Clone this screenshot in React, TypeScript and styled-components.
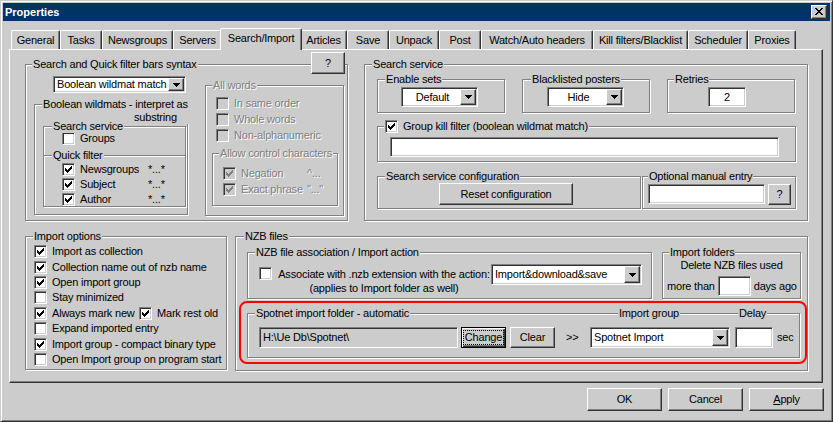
import React from "react";
import styled, { createGlobalStyle, css } from "styled-components";

const FACE = "#cccccc";
const LIGHT = "#ffffff";
const SHADOW = "#808080";
const DARK = "#333333";

const GlobalStyle = createGlobalStyle`
  html, body { margin: 0; padding: 0; background: ${FACE}; }
  body {
    font-family: "Liberation Sans", Arial, sans-serif;
    font-size: 11px;
    line-height: 13px;
    letter-spacing: -0.2px;
    color: #000;
  }
  *, *::before, *::after { box-sizing: border-box; }
`;

const raised = css`
  background: ${FACE};
  border: 1px solid;
  border-color: ${LIGHT} ${DARK} ${DARK} ${LIGHT};
  box-shadow: inset -1px -1px ${SHADOW};
`;

const sunken = css`
  border: 1px solid;
  border-color: ${SHADOW} ${LIGHT} ${LIGHT} ${SHADOW};
  box-shadow: inset 1px 1px ${DARK}, inset -1px -1px ${FACE};
`;

const disabledText = css`
  color: ${SHADOW};
  text-shadow: 1px 1px 0 ${LIGHT};
`;

const Window = styled.div`
  width: 833px;
  height: 422px;
  background: ${FACE};
  border: 1px solid;
  border-color: ${FACE} ${DARK} ${DARK} ${FACE};
  box-shadow: inset 1px 1px ${LIGHT}, inset -1px -1px ${SHADOW};
  padding: 2px;
  display: flex;
  flex-direction: column;
`;

const TitleBar = styled.div`
  height: 18px;
  background: #003366;
  color: #fff;
  font-weight: bold;
  letter-spacing: 0;
  display: flex;
  align-items: center;
  justify-content: space-between;
  padding: 0 3px 0 2px;
`;

const CloseButton = styled.div`
  ${raised};
  width: 16px;
  height: 14px;
  display: flex;
  align-items: center;
  justify-content: center;
  padding-bottom: 1px;
`;

const TabStrip = styled.div`
  display: flex;
  align-items: flex-end;
  height: 21px;
  margin: 7px 0 0 8px;
`;

const Tab = styled.div<{ $w: number; $active?: boolean }>`
  flex: none;
  width: ${(p) => (p.$active ? p.$w + 4 : p.$w)}px;
  height: ${(p) => (p.$active ? 22 : 19)}px;
  margin: ${(p) => (p.$active ? "0 -2px -1px" : "0")};
  position: relative;
  z-index: ${(p) => (p.$active ? 1 : 0)};
  background: ${FACE};
  border-top: 1px solid ${LIGHT};
  border-left: 1px solid ${LIGHT};
  border-right: 1px solid ${DARK};
  box-shadow: inset -1px 0 ${SHADOW};
  border-radius: 2px 2px 0 0;
  text-align: center;
  padding-top: 3px;
  white-space: nowrap;
`;

const Panel = styled.div`
  width: 814px;
  height: 334px;
  margin-left: 6px;
  border-top: 1px solid ${LIGHT};
  border-left: 1px solid ${LIGHT};
  border-right: 1px solid ${DARK};
  border-bottom: 1px solid ${DARK};
  box-shadow: inset -1px -1px ${SHADOW};
  padding: 14px 0 0 15px;
  display: flex;
  flex-direction: column;
  gap: 15px;
`;

const GroupRow = styled.div<{ $gap: number; $mt?: number; $ml?: number }>`
  display: flex;
  align-items: flex-start;
  gap: ${(p) => p.$gap}px;
  margin-top: ${(p) => p.$mt ?? 0}px;
  margin-left: ${(p) => p.$ml ?? 0}px;
`;

const Group = styled.div<{
  $w: number;
  $h: number;
  $pad?: string;
  $mt?: number;
  $dir?: "row" | "column";
  $gap?: number;
}>`
  position: relative;
  flex: none;
  width: ${(p) => p.$w}px;
  height: ${(p) => p.$h}px;
  margin-top: ${(p) => p.$mt ?? 0}px;
  border: 1px solid ${SHADOW};
  box-shadow: inset 1px 1px ${LIGHT}, 1px 1px ${LIGHT};
  padding: ${(p) => p.$pad ?? "0"};
  display: flex;
  flex-direction: ${(p) => p.$dir ?? "column"};
  align-items: flex-start;
  gap: ${(p) => p.$gap ?? 0}px;
`;

const Legend = styled.span<{ $left?: number; $disabled?: boolean }>`
  position: absolute;
  top: -7px;
  left: ${(p) => p.$left ?? 7}px;
  padding: 0 1px;
  background: ${FACE};
  line-height: 13px;
  white-space: nowrap;
  ${(p) => p.$disabled && disabledText};
`;

const LegendSecondLine = styled.span`
  display: block;
  margin-left: 91px;
`;

const CheckLegend = styled.span`
  position: absolute;
  top: -7px;
  left: 6px;
  padding: 0 1px;
  background: ${FACE};
  display: flex;
  align-items: center;
  gap: 5px;
  height: 13px;
  white-space: nowrap;
`;

const CornerButton = styled.div`
  ${raised};
  position: absolute;
  left: 285px;
  top: -13px;
  width: 34px;
  height: 22px;
  display: flex;
  align-items: center;
  justify-content: center;
`;

const Column = styled.div<{ $pt: number }>`
  display: flex;
  flex-direction: column;
  align-items: flex-start;
  padding-top: ${(p) => p.$pt}px;
`;

const CheckList = styled.div<{ $pl: number; $mt?: number; $row: number }>`
  display: flex;
  flex-direction: column;
  padding-left: ${(p) => p.$pl}px;
  margin-top: ${(p) => p.$mt ?? 0}px;
  & > div { height: ${(p) => p.$row}px; }
`;

const CheckRow = styled.div<{ $disabled?: boolean }>`
  display: flex;
  align-items: center;
  gap: 5px;
  white-space: nowrap;
  ${(p) => p.$disabled && disabledText};
`;

const CheckLabel = styled.span<{ $w?: number }>`
  display: inline-block;
  flex: none;
  ${(p) => (p.$w ? `width: ${p.$w}px;` : "")}
  white-space: nowrap;
`;

const Pattern = styled.span`
  white-space: pre;
`;

const CheckBoxFrame = styled.span<{ $disabled?: boolean; $mt?: number }>`
  ${sunken};
  flex: none;
  width: 13px;
  height: 13px;
  margin-top: ${(p) => p.$mt ?? 0}px;
  background: ${(p) => (p.$disabled ? FACE : "#fff")};
  display: flex;
  align-items: center;
  justify-content: center;
`;

const Separator = styled.div<{ $mt: number }>`
  position: relative;
  align-self: stretch;
  height: 2px;
  margin-top: ${(p) => p.$mt}px;
  border-top: 1px solid ${SHADOW};
  border-bottom: 1px solid ${LIGHT};
`;

const ComboFrame = styled.div<{ $w: number; $h: number; $ml?: number; $mt?: number }>`
  ${sunken};
  flex: none;
  background: #fff;
  width: ${(p) => p.$w}px;
  height: ${(p) => p.$h}px;
  margin-left: ${(p) => p.$ml ?? 0}px;
  margin-top: ${(p) => p.$mt ?? 0}px;
  padding: 1px;
  display: flex;
`;

const ComboText = styled.div<{ $center?: boolean }>`
  flex: 1;
  display: flex;
  align-items: center;
  justify-content: ${(p) => (p.$center ? "center" : "flex-start")};
  padding-left: 2px;
  white-space: nowrap;
  overflow: hidden;
`;

const DropButton = styled.div`
  ${raised};
  flex: none;
  width: 16px;
  display: flex;
  align-items: center;
  justify-content: center;
`;

const TextBox = styled.div<{ $w: number; $h: number; $ml?: number; $center?: boolean; $disabled?: boolean }>`
  ${sunken};
  flex: none;
  width: ${(p) => p.$w}px;
  height: ${(p) => p.$h}px;
  margin-left: ${(p) => p.$ml ?? 0}px;
  background: ${(p) => (p.$disabled ? FACE : "#fff")};
  display: flex;
  align-items: center;
  justify-content: ${(p) => (p.$center ? "center" : "flex-start")};
  padding: 0 3px;
  white-space: nowrap;
  overflow: hidden;
`;

const Button = styled.div<{ $w: number; $h: number; $ml?: number; $default?: boolean }>`
  ${raised};
  flex: none;
  width: ${(p) => p.$w}px;
  height: ${(p) => p.$h}px;
  margin-left: ${(p) => p.$ml ?? 0}px;
  display: flex;
  align-items: center;
  justify-content: center;
  white-space: nowrap;
  ${(p) =>
    p.$default &&
    css`
      border: 1px solid #000;
      box-shadow: inset 1px 1px ${LIGHT}, inset -1px -1px ${DARK}, inset -2px -2px ${SHADOW};
    `};
`;

const FocusText = styled.span`
  outline: 1px dotted #000;
  outline-offset: 0;
  padding: 0 1px;
  line-height: 13px;
`;

const Underline = styled.span`
  text-decoration: underline;
`;

const AssocText = styled.div`
  flex: none;
  width: 214px;
  margin: 14px 0 0 5px;
  line-height: 14px;
  text-align: center;
  white-space: nowrap;
`;

const CenterLine = styled.div`
  align-self: stretch;
  text-align: center;
  line-height: 14px;
  white-space: nowrap;
`;

const InlineRow = styled.div<{ $mt: number; $pl: number; $gap: number }>`
  display: flex;
  align-items: center;
  gap: ${(p) => p.$gap}px;
  margin-top: ${(p) => p.$mt}px;
  padding-left: ${(p) => p.$pl}px;
  white-space: nowrap;
`;

const Highlight = styled.div`
  width: 568px;
  height: 63px;
  margin-top: 2px;
  border: 2px solid #ff0000;
  border-radius: 8px;
  padding: 10px 0 0 6px;
`;

const Arrows = styled.span`
  flex: none;
  width: 24px;
  margin-left: 11px;
  line-height: 21px;
`;

const Unit = styled.span`
  margin-left: 4px;
  line-height: 21px;
`;

const ButtonBar = styled.div`
  display: flex;
  justify-content: flex-end;
  gap: 6px;
  margin-top: 5px;
  padding-right: 6px;
`;

/* ---------- drawings ---------- */

const CheckMark = ({ color }: { color: string }) => (
  <svg width="7" height="7" viewBox="0 0 7 7" shapeRendering="crispEdges">
    <path
      fill={color}
      d="M6 0h1v1h-1z M5 1h2v1h-2z M0 2h1v1h-1z M4 2h3v1h-3z M0 3h2v1h-2z M3 3h3v1h-3z M0 4h5v1h-5z M1 5h3v1h-3z M2 6h1v1h-1z"
    />
  </svg>
);

const DownArrow = () => (
  <svg width="7" height="4" viewBox="0 0 7 4" shapeRendering="crispEdges">
    <path fill="#000" d="M0 0h7v1H0z M1 1h5v1H1z M2 2h3v1H2z M3 3h1v1H3z" />
  </svg>
);

const CloseGlyph = () => (
  <svg width="8" height="7" viewBox="0 0 8 7" shapeRendering="crispEdges">
    <path
      fill="#000"
      d="M0 0h2v1H0z M6 0h2v1H6z M1 1h2v1H1z M5 1h2v1H5z M2 2h4v1H2z M3 3h2v1H3z M2 4h4v1H2z M1 5h2v1H1z M5 5h2v1H5z M0 6h2v1H0z M6 6h2v1H6z"
    />
  </svg>
);

const Check = ({ on, disabled, mt }: { on?: boolean; disabled?: boolean; mt?: number }) => (
  <CheckBoxFrame $disabled={disabled} $mt={mt}>
    {on && <CheckMark color={disabled ? SHADOW : "#000"} />}
  </CheckBoxFrame>
);

const Combo = ({
  w,
  h,
  ml,
  mt,
  center,
  children,
}: {
  w: number;
  h: number;
  ml?: number;
  mt?: number;
  center?: boolean;
  children: React.ReactNode;
}) => (
  <ComboFrame $w={w} $h={h} $ml={ml} $mt={mt}>
    <ComboText $center={center}>{children}</ComboText>
    <DropButton>
      <DownArrow />
    </DropButton>
  </ComboFrame>
);

const TABS: { label: string; w: number; active?: boolean }[] = [
  { label: "General", w: 49 },
  { label: "Tasks", w: 42 },
  { label: "Newsgroups", w: 71 },
  { label: "Servers", w: 49 },
  { label: "Search/Import", w: 78, active: true },
  { label: "Articles", w: 47 },
  { label: "Save", w: 42 },
  { label: "Unpack", w: 50 },
  { label: "Post", w: 42 },
  { label: "Watch/Auto headers", w: 112 },
  { label: "Kill filters/Blacklist", w: 95 },
  { label: "Scheduler", w: 60 },
  { label: "Proxies", w: 48 },
];

const IMPORT_OPTIONS: { label: string; on: boolean }[] = [
  { label: "Import as collection", on: true },
  { label: "Collection name out of nzb name", on: true },
  { label: "Open import group", on: true },
  { label: "Stay minimized", on: false },
  { label: "", on: true },
  { label: "Expand imported entry", on: false },
  { label: "Import group - compact binary type", on: true },
  { label: "Open Import group on program start", on: false },
];

export default function App() {
  return (
    <>
      <GlobalStyle />
      <Window>
        <TitleBar>
          <span>Properties</span>
          <CloseButton>
            <CloseGlyph />
          </CloseButton>
        </TitleBar>

        <TabStrip>
          {TABS.map((t) => (
            <Tab key={t.label} $w={t.w} $active={t.active}>
              {t.label}
            </Tab>
          ))}
        </TabStrip>

        <Panel>
          <GroupRow $gap={16}>
            {/* Search and Quick filter bars syntax */}
            <Group $w={323} $h={157} $dir="row" $pad="0 0 0 8px" $gap={17}>
              <Legend $left={6}>Search and Quick filter bars syntax</Legend>
              <CornerButton>?</CornerButton>
              <Column $pt={11}>
                <Combo w={133} h={17} ml={19}>
                  Boolean wildmat match
                </Combo>
                <Group $w={154} $h={111} $mt={11} $pad="21px 0 0 8px">
                  <Legend $left={7}>
                    Boolean wildmats - interpret as
                    <LegendSecondLine>substring</LegendSecondLine>
                  </Legend>
                  <Group $w={143} $h={81} $pad="4px 0 0 0">
                    <Legend $left={8}>Search service</Legend>
                    <CheckList $pl={18} $row={15}>
                      <CheckRow>
                        <Check />
                        <CheckLabel>Groups</CheckLabel>
                      </CheckRow>
                    </CheckList>
                    <Separator $mt={9}>
                      <Legend $left={8}>Quick filter</Legend>
                    </Separator>
                    <CheckList $pl={18} $mt={5} $row={15}>
                      {["Newsgroups", "Subject", "Author"].map((l) => (
                        <CheckRow key={l}>
                          <Check on />
                          <CheckLabel $w={63}>{l}</CheckLabel>
                          <Pattern>*...*</Pattern>
                        </CheckRow>
                      ))}
                    </CheckList>
                  </Group>
                </Group>
              </Column>

              <Group $w={139} $h={131} $mt={20} $pad="9px 0 0 6px">
                <Legend $left={6} $disabled>
                  All words
                </Legend>
                <CheckList $pl={4} $row={16}>
                  {["In same order", "Whole words", "Non-alphanumeric"].map((l) => (
                    <CheckRow key={l} $disabled>
                      <Check disabled />
                      <CheckLabel>{l}</CheckLabel>
                    </CheckRow>
                  ))}
                </CheckList>
                <Group $w={126} $h={53} $mt={10} $pad="11px 0 0 10px">
                  <Legend $left={6} $disabled>
                    Allow control characters
                  </Legend>
                  <CheckList $pl={0} $row={16}>
                    <CheckRow $disabled>
                      <Check on disabled />
                      <CheckLabel $w={61}>Negation</CheckLabel>
                      <Pattern>^...</Pattern>
                    </CheckRow>
                    <CheckRow $disabled>
                      <Check on disabled />
                      <CheckLabel $w={61}>Exact phrase</CheckLabel>
                      <Pattern>"..."</Pattern>
                    </CheckRow>
                  </CheckList>
                </Group>
              </Group>
            </Group>

            {/* Search service */}
            <Group $w={444} $h={157} $pad="14px 0 0 12px">
              <Legend>Search service</Legend>
              <GroupRow $gap={17}>
                <Group $w={128} $h={34} $pad="7px 0 0 23px">
                  <Legend>Enable sets</Legend>
                  <Combo w={77} h={20} center>
                    Default
                  </Combo>
                </Group>
                <Group $w={128} $h={34} $pad="7px 0 0 24px">
                  <Legend $left={8}>Blacklisted posters</Legend>
                  <Combo w={77} h={20} center>
                    Hide
                  </Combo>
                </Group>
                <Group $w={128} $h={34} $pad="7px 0 0 40px">
                  <Legend $left={6}>Retries</Legend>
                  <TextBox $w={38} $h={20} $center>
                    2
                  </TextBox>
                </Group>
              </GroupRow>

              <Group $w={419} $h={36} $mt={13} $pad="10px 0 0 12px">
                <CheckLegend>
                  <Check on />
                  <span>Group kill filter (boolean wildmat match)</span>
                </CheckLegend>
                <TextBox $w={389} $h={20} />
              </Group>

              <GroupRow $gap={1} $mt={14}>
                <Group $w={264} $h={33} $pad="6px 0 0 61px">
                  <Legend>Search service configuration</Legend>
                  <Button $w={134} $h={22}>
                    Reset configuration
                  </Button>
                </Group>
                <Group $w={154} $h={33} $dir="row" $gap={3} $pad="7px 0 0 5px">
                  <Legend $left={5}>Optional manual entry</Legend>
                  <TextBox $w={117} $h={20} />
                  <Button $w={23} $h={21}>
                    ?
                  </Button>
                </Group>
              </GroupRow>
            </Group>
          </GroupRow>

          <GroupRow $gap={8}>
            {/* Import options */}
            <Group $w={202} $h={134} $pad="7px 0 0 8px">
              <Legend>Import options</Legend>
              <CheckList $pl={0} $row={15.43}>
                {IMPORT_OPTIONS.map((o, i) =>
                  i === 4 ? (
                    <CheckRow key="always">
                      <Check on />
                      <CheckLabel $w={82}>Always mark new</CheckLabel>
                      <Check on />
                      <CheckLabel>Mark rest old</CheckLabel>
                    </CheckRow>
                  ) : (
                    <CheckRow key={o.label}>
                      <Check on={o.on} />
                      <CheckLabel>{o.label}</CheckLabel>
                    </CheckRow>
                  )
                )}
              </CheckList>
            </Group>

            {/* NZB files */}
            <Group $w={573} $h={135} $pad="15px 0 0 3px">
              <Legend $left={8}>NZB files</Legend>
              <GroupRow $gap={10} $ml={8}>
                <Group $w={405} $h={47} $dir="row" $pad="0 0 0 11px">
                  <Legend>NZB file association / Import action</Legend>
                  <Check mt={14} />
                  <AssocText>
                    Associate with .nzb extension with the action:
                    <br />
                    (applies to Import folder as well)
                  </AssocText>
                  <Combo w={151} h={21} mt={11}>
                    Import&amp;download&amp;save
                  </Combo>
                </Group>
                <Group $w={139} $h={47} $pad="5px 0 0 0">
                  <Legend $left={6}>Import folders</Legend>
                  <CenterLine>Delete NZB files used</CenterLine>
                  <InlineRow $mt={4} $pl={4} $gap={3}>
                    <span>more than</span>
                    <TextBox $w={33} $h={20} />
                    <span>days ago</span>
                  </InlineRow>
                </Group>
              </GroupRow>

              <Highlight>
                <Group $w={553} $h={45} $dir="row" $pad="13px 0 0 11px">
                  <Legend>Spotnet import folder - automatic</Legend>
                  <Legend $left={370}>Import group</Legend>
                  <Legend $left={490}>Delay</Legend>
                  <TextBox $w={199} $h={21} $disabled>
                    {"H:\\Ue Db\\Spotnet\\"}
                  </TextBox>
                  <Button $w={45} $h={21} $ml={3} $default>
                    <FocusText>Change</FocusText>
                  </Button>
                  <Button $w={45} $h={21} $ml={4}>
                    Clear
                  </Button>
                  <Arrows>&gt;&gt;</Arrows>
                  <Combo w={140} h={21}>
                    Spotnet Import
                  </Combo>
                  <TextBox $w={38} $h={21} $ml={5} />
                  <Unit>sec</Unit>
                </Group>
              </Highlight>
            </Group>
          </GroupRow>
        </Panel>

        <ButtonBar>
          <Button $w={75} $h={23}>
            OK
          </Button>
          <Button $w={75} $h={23}>
            Cancel
          </Button>
          <Button $w={75} $h={23}>
            <span>
              <Underline>A</Underline>pply
            </span>
          </Button>
        </ButtonBar>
      </Window>
    </>
  );
}
